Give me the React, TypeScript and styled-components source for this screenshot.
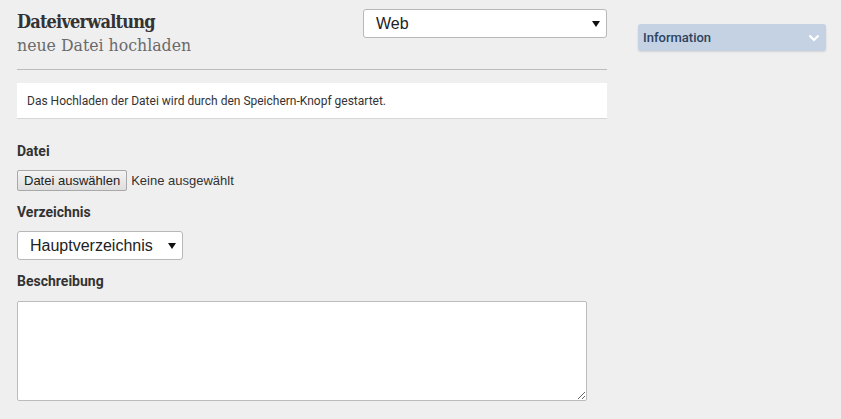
import React from "react";
import styled, { createGlobalStyle } from "styled-components";

const GlobalStyle = createGlobalStyle`
  html, body {
    margin: 0;
    padding: 0;
    background-color: #efefef;
    font-family: Roboto, "Liberation Sans", Arial, sans-serif;
    color: #333333;
  }
`;

export default function App() {
  return (
    <>
      <GlobalStyle />
      <Page>
        <Main>
          <Header>
            <TitleBlock>
              <Title>Dateiverwaltung</Title>
              <Subtitle>neue Datei hochladen</Subtitle>
            </TitleBlock>
            <SelectWrap width="244px">
              <Select defaultValue="web">
                <option value="web">Web</option>
              </Select>
              <Arrow />
            </SelectWrap>
          </Header>
          <Notice>Das Hochladen der Datei wird durch den Speichern-Knopf gestartet.</Notice>
          <Form>
            <Field>
              <Label>Datei</Label>
              <FileRow>
                <FileButton type="button">Datei auswählen</FileButton>
                <FileName>Keine ausgewählt</FileName>
              </FileRow>
            </Field>
            <Field>
              <Label>Verzeichnis</Label>
              <SelectWrap width="166px">
                <Select defaultValue="root">
                  <option value="root">Hauptverzeichnis</option>
                </Select>
                <Arrow />
              </SelectWrap>
            </Field>
            <Field>
              <Label>Beschreibung</Label>
              <TextArea />
            </Field>
          </Form>
        </Main>
        <Sidebar>
          <Panel>
            <PanelTitle>Information</PanelTitle>
            <svg width="12" height="8" viewBox="0 0 12 8">
              <path d="M1.5 1.5 L6 6 L10.5 1.5" fill="none" stroke="#ffffff" strokeWidth="2.2" />
            </svg>
          </Panel>
        </Sidebar>
      </Page>
    </>
  );
}

function Arrow() {
  return (
    <ArrowIcon width="8" height="6" viewBox="0 0 8 6">
      <path d="M0 0 H8 L4 6 Z" fill="#111111" />
    </ArrowIcon>
  );
}

const Page = styled.div`
  display: flex;
  align-items: flex-start;
  gap: 31px;
  padding: 9px 0 0 17px;
`;

const Main = styled.div`
  width: 590px;
  display: flex;
  flex-direction: column;
`;

const Header = styled.div`
  display: flex;
  justify-content: space-between;
  align-items: flex-start;
  border-bottom: 1px solid #bcbcbc;
  padding-bottom: 13px;
`;

const TitleBlock = styled.div`
  display: flex;
  flex-direction: column;
  padding-top: 1px;
`;

const Title = styled.h1`
  margin: 0;
  font-family: "DejaVu Serif Condensed", "DejaVu Serif", "Liberation Serif", serif;
  font-stretch: condensed;
  font-weight: bold;
  font-size: 18px;
  line-height: 24px;
  color: #333333;
  letter-spacing: -0.8px;
`;

const Subtitle = styled.h2`
  margin: 0;
  font-family: "DejaVu Serif Condensed", "DejaVu Serif", "Liberation Serif", serif;
  font-stretch: condensed;
  font-weight: normal;
  font-size: 17.5px;
  line-height: 22px;
  color: #6a6a6a;
`;

const SelectWrap = styled.div<{ width: string }>`
  position: relative;
  width: ${(p) => p.width};
  height: 29px;
`;

const Select = styled.select`
  appearance: none;
  width: 100%;
  height: 100%;
  box-sizing: border-box;
  border: 1px solid #b8b8b8;
  border-radius: 3px;
  background: #ffffff;
  font-family: "Liberation Sans", Arial, sans-serif;
  font-size: 16px;
  color: #222222;
  padding: 0 0 0 12px;
  outline: none;
`;

const ArrowIcon = styled.svg`
  position: absolute;
  right: 7px;
  top: 12px;
  pointer-events: none;
`;

const Notice = styled.div`
  margin-top: 13px;
  background: #ffffff;
  border-bottom: 1px solid #d6d6d6;
  padding: 11px 10px 10px;
  font-size: 12px;
  line-height: 14px;
  color: #333333;
`;

const Form = styled.div`
  display: flex;
  flex-direction: column;
  gap: 13px;
  margin-top: 24px;
`;

const Field = styled.div`
  display: flex;
  flex-direction: column;
  gap: 11px;
  align-items: flex-start;
`;

const Label = styled.label`
  font-weight: bold;
  font-size: 14px;
  line-height: 16px;
  color: #333333;
`;

const FileRow = styled.div`
  display: flex;
  align-items: center;
  gap: 4px;
`;

const FileButton = styled.button`
  height: 21px;
  padding: 0 6px;
  border: 1px solid #a9a9a9;
  border-radius: 2px;
  background: linear-gradient(#f4f4f4, #dedede);
  font-family: "Liberation Sans", Arial, sans-serif;
  font-size: 13px;
  color: #222222;
`;

const FileName = styled.span`
  font-family: "Liberation Sans", Arial, sans-serif;
  font-size: 13px;
  color: #333333;
`;

const TextArea = styled.textarea`
  width: 570px;
  height: 100px;
  box-sizing: border-box;
  border: 1px solid #bcbcbc;
  border-radius: 2px;
  background: #ffffff;
  outline: none;
  margin: 1px 0 0;
`;

const Sidebar = styled.div`
  width: 188px;
  padding-top: 15px;
`;

const Panel = styled.div`
  display: flex;
  justify-content: space-between;
  align-items: center;
  height: 27px;
  padding: 0 6px 0 5px;
  background: #c4d2e3;
  border-radius: 3px;
  box-shadow: 0 1px 2px rgba(0, 0, 0, 0.12);
`;

const PanelTitle = styled.span`
  font-weight: 500;
  font-size: 13px;
  color: #2e4360;
`;
